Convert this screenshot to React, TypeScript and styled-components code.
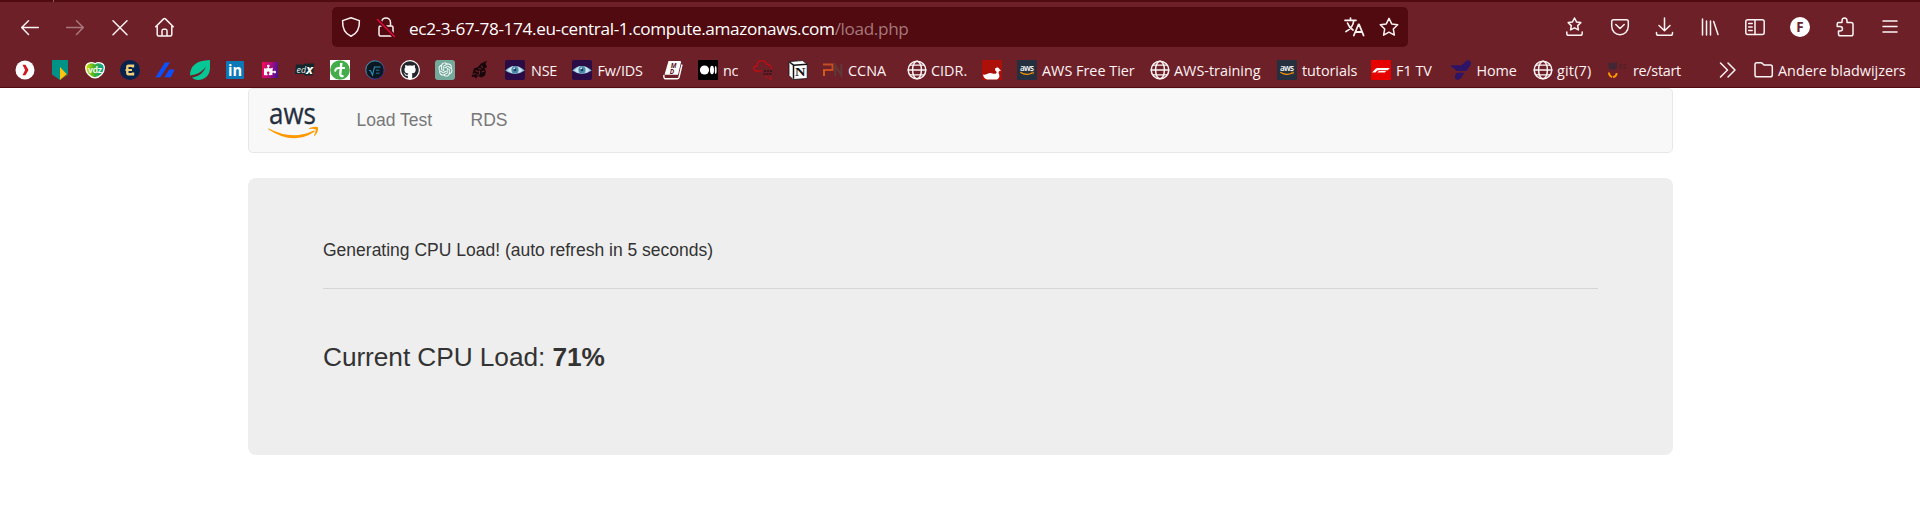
import React from "react";
import styled, { createGlobalStyle } from "styled-components";
import { FaGithub, FaPuzzlePiece } from "react-icons/fa";
import { RiOpenaiFill } from "react-icons/ri";

const chrome = "#6e2028";
const chromeDark = "#500a10";
const ink = "#fbf3f4";

const GlobalStyle = createGlobalStyle`
  body { margin: 0; background: #fff; }
  * { box-sizing: border-box; }
`;

const Screen = styled.div`
  width: 1920px;
  height: 532px;
  overflow: hidden;
  display: flex;
  flex-direction: column;
  background: #fff;
`;

const Chrome = styled.header`
  height: 88px;
  flex: none;
  background: ${chrome};
  border-bottom: 1px solid ${chromeDark};
  color: ${ink};
  font-family: "Open Sans", "Noto Sans", sans-serif;
`;

const TabEdge = styled.div`
  height: 2px;
  padding-left: 53px;
  background: ${chromeDark};
`;

const TabTick = styled.div`
  width: 1px;
  height: 2px;
  background: #94585e;
`;

const Toolbar = styled.div`
  height: 50px;
  padding-left: 20px;
  display: flex;
  align-items: center;
`;

const IconRow = styled.div<{ $gap: number; $margin?: string }>`
  display: flex;
  flex: none;
  gap: ${(p) => p.$gap}px;
  margin: ${(p) => p.$margin ?? "0"};
`;

const Glyph = styled.svg<{ $dim?: boolean }>`
  width: 20px;
  height: 20px;
  flex: none;
  display: block;
  overflow: visible;
  fill: none;
  stroke: ${ink};
  stroke-width: 1.5;
  stroke-linecap: round;
  stroke-linejoin: round;
  opacity: ${(p) => (p.$dim ? 0.42 : 1)};
`;

const AddressBar = styled.div`
  flex: none;
  width: 1076px;
  height: 40px;
  margin-left: 157px;
  padding: 0 9px 0 9px;
  border-radius: 5px;
  background: ${chromeDark};
  display: flex;
  align-items: center;
`;

const Url = styled.div`
  flex: 1;
  margin-left: 13px;
  padding-top: 4px;
  font-size: 17.2px;
  line-height: 24px;
  letter-spacing: -0.365px;
  white-space: nowrap;
  color: #fff;
`;

const UrlPath = styled.span`
  color: #a6787c;
`;

const BookmarkBar = styled.nav`
  height: 35px;
  padding: 0 0 0 15px;
  display: flex;
  align-items: center;
`;

const Bookmark = styled.div<{ $width: number }>`
  flex: none;
  width: ${(p) => p.$width}px;
  height: 20px;
  display: flex;
  align-items: center;
`;

const Label = styled.span<{ $gap: number; $spacing?: number }>`
  margin-left: ${(p) => p.$gap}px;
  padding-top: 3px;
  font-size: 14.4px;
  line-height: 20px;
  letter-spacing: ${(p) => p.$spacing ?? 0}px;
  white-space: nowrap;
`;

const Favicon = styled.svg`
  width: 20px;
  height: 20px;
  display: block;
  flex: none;
`;

const Tile = styled.div<{ $bg: string; $round?: string; $fg?: string; $size?: number }>`
  width: ${(p) => p.$size ?? 20}px;
  height: ${(p) => p.$size ?? 20}px;
  margin: ${(p) => (20 - (p.$size ?? 20)) / 2}px;
  flex: none;
  display: flex;
  align-items: center;
  justify-content: center;
  border-radius: ${(p) => p.$round ?? "0"};
  background: ${(p) => p.$bg};
  color: ${(p) => p.$fg ?? "#fff"};
`;

const Page = styled.main`
  width: 1425px;
  margin-left: 248px;
  font-family: "Liberation Sans", Arial, sans-serif;
`;

const Navbar = styled.div`
  height: 65px;
  padding-left: 19px;
  border: 1px solid #e7e7e7;
  border-radius: 5px;
  background: #f8f8f8;
  display: flex;
  align-items: flex-start;
`;

const AwsLogo = styled.svg`
  width: 52px;
  height: 34px;
  margin-top: 18px;
  flex: none;
  overflow: visible;
`;

const NavLink = styled.a<{ $left: number }>`
  margin: 19px 0 0 ${(p) => p.$left}px;
  color: #777;
  font-size: 17.5px;
  line-height: 24px;
  white-space: nowrap;
`;

const Jumbotron = styled.section`
  height: 277px;
  margin-top: 25px;
  padding: 60px 75px 0;
  border-radius: 8px;
  background: #eee;
  color: #333;
`;

const Status = styled.p`
  margin: 0;
  font-size: 17.5px;
  line-height: 25px;
  white-space: nowrap;
`;

const Rule = styled.hr`
  margin: 25px 0 0;
  border: 0;
  border-top: 1px solid #d5d5d5;
`;

const Load = styled.p`
  margin: 50px 0 0;
  font-size: 26.25px;
  line-height: 36px;
  letter-spacing: -0.06px;
  white-space: nowrap;
`;

const Globe = () => (
  <Glyph viewBox="0 0 20 20">
    <circle cx="10" cy="10" r="8.8" />
    <ellipse cx="10" cy="10" rx="4.4" ry="8.8" />
    <path d="M1.2 10h17.6M3 5.2h14M3 14.8h14" strokeWidth="1.3" />
  </Glyph>
);

const Aws = () => (
  <Favicon viewBox="0 0 20 20">
    <rect width="20" height="20" fill="#252f3e" />
    <text x="10" y="11.3" textAnchor="middle" fontFamily="Open Sans, sans-serif" fontWeight="600" fontSize="8.2" textLength="14" fill="#fff">aws</text>
    <path d="M3.3 12.2q6 4 12 .8" fill="none" stroke="#f90" strokeWidth="1.1" />
    <path d="M14.3 12.2h2.2l-.6 2" fill="none" stroke="#f90" strokeWidth=".8" />
  </Favicon>
);

const Eye = () => (
  <Favicon viewBox="0 0 20 20">
    <rect width="20" height="20" rx="2" fill="#2a0b45" />
    <path d="M.3 10.400Q9.500 1.500 19.700 10.400Q10 17.500 .3 10.400Z" fill="#86b9d1" />
    <path d="M2.500 10.400Q6 6.500 8 6.300L7.500 13.300Q5 12.500 2.500 10.400ZM12.500 6.300Q16 8 17.500 10.400Q15 12.600 12.500 13.300Z" fill="#cfe8f2" />
    <circle cx="10" cy="9.900" r="3.600" fill="#4f8aaa" />
    <circle cx="10" cy="9.900" r="1.300" fill="#123a57" />
    <circle cx="9.200" cy="8.400" r=".8" fill="#d9f2fa" />
  </Favicon>
);

const star = "M10 1.400l2.700 5.500 6 .9-4.400 4.200 1.100 6.100L10 15.200l-5.400 2.900 1.100-6.100L1.300 7.800l6-.9z";

type Entry = { width: number; icon: React.ReactNode; label?: string; gap?: number; spacing?: number };

const bookmarks: Entry[] = [
  {
    width: 35,
    icon: (
      <Favicon viewBox="0 0 20 20">
        <circle cx="10" cy="10" r="9.500" fill="#fff" />
        <path d="M7.500 4.800h3l3 5.200-3 5.200h-3l2.600-5.200z" fill="#d6181f" />
      </Favicon>
    ),
  },
  {
    width: 35,
    icon: (
      <Favicon viewBox="0 0 20 20">
        <path d="M2 0h16v14.500L10 20l-8-5.500z" fill="#009286" />
        <path d="M10 7l6.800 7.200L10 20z" fill="#ffc20e" />
        <path d="M16.800 14.200L18 15l-8 5z" fill="#6b5b22" />
      </Favicon>
    ),
  },
  {
    width: 35,
    icon: (
      <Favicon viewBox="0 0 20 20">
        <defs>
          <linearGradient id="heart" x1="0" x2="1">
            <stop offset="0" stopColor="#e9e400" />
            <stop offset=".45" stopColor="#43b02a" />
            <stop offset="1" stopColor="#00a3a0" />
          </linearGradient>
        </defs>
        <path d="M10 17.800C5 17.500.7 12.500.7 8 .7 2.800 6.500 1.500 10 3.800c3.500-2.300 9.300-1 9.300 4.200 0 4.500-4.300 9.500-9.300 9.800z" fill="url(#heart)" stroke="#fff" strokeWidth="1.300" />
        <text x="10" y="13" textAnchor="middle" fontFamily="Lato, sans-serif" fontWeight="700" fontSize="9" textLength="14" lengthAdjust="spacingAndGlyphs" fill="#fff">vdz</text>
      </Favicon>
    ),
  },
  {
    width: 35,
    icon: (
      <Favicon viewBox="0 0 20 20">
        <circle cx="10" cy="10" r="10" fill="#05234d" />
        <path d="M13 7.500V5.800H8.300Q7.300 5.800 7.300 6.800v6.400q0 1 1 1H13v-1.700" fill="none" stroke="#f1cf7a" strokeWidth="2.400" />
        <path d="M5.500 10h6.500" stroke="#f1cf7a" strokeWidth="2" />
      </Favicon>
    ),
  },
  {
    width: 35,
    icon: (
      <Favicon viewBox="0 0 20 20">
        <path d="M10 2.500h5L5.200 17.200H.5z" fill="#0a50ff" />
        <path d="M14.200 9.500h5.300l-3.600 7.700h-6.400z" fill="#0a50ff" />
      </Favicon>
    ),
  },
  {
    width: 35,
    icon: (
      <Favicon viewBox="0 0 20 20">
        <path d="M20 0v8c0 8-6 12-12 12-2.500 0-4.500-1-6-2.500C9 17 14 12 16 6.500 12 12 7 14.500 0 15.500 0 6 6 .5 20 0z" fill="#06c795" />
      </Favicon>
    ),
  },
  {
    width: 35,
    icon: (
      <Favicon viewBox="0 0 20 20">
        <rect x="1" y="1" width="18" height="18" rx="1" fill="#0b78b7" />
        <text x="3" y="15.700" textLength="14" lengthAdjust="spacingAndGlyphs" fontFamily="Open Sans, sans-serif" fontWeight="700" fontSize="16" fill="#fff">in</text>
      </Favicon>
    ),
  },
  {
    width: 35,
    icon: (
      <Tile $size={16} $bg="linear-gradient(100deg,#f2095c 5%,#b00d7b 50%,#3c1199)">
        <FaPuzzlePiece size={12} />
      </Tile>
    ),
  },
  {
    width: 35,
    icon: (
      <Favicon viewBox="0 0 20 20">
        <path d="M1 4.500h8l1-1h9.500l-1.500 12H9.500l-.5-1.500H0z" fill="#14272a" />
        <text x="1.500" y="12.500" textLength="9.500" lengthAdjust="spacingAndGlyphs" fontFamily="Open Sans, sans-serif" fontStyle="italic" fontSize="9" fill="#e9eeee">ed</text>
        <text x="11" y="14" textLength="7" lengthAdjust="spacingAndGlyphs" fontFamily="Open Sans, sans-serif" fontStyle="italic" fontWeight="700" fontSize="13" fill="#fff">x</text>
      </Favicon>
    ),
  },
  {
    width: 35,
    icon: (
      <Favicon viewBox="0 0 20 20">
        <rect width="20" height="20" fill="#fff" />
        <circle cx="10" cy="10" r="9.800" fill="#43ad49" />
        <path d="M11.300 3L10.300 14q0 2.800 3.200 1.800" fill="none" stroke="#fff" strokeWidth="2.400" />
        <path d="M5 11.500Q5.500 8 9 8h6" fill="none" stroke="#fff" strokeWidth="2" />
      </Favicon>
    ),
  },
  {
    width: 35,
    icon: (
      <Favicon viewBox="0 0 20 20">
        <defs>
          <linearGradient id="ring" x1="0" y1="0" x2="1" y2="1">
            <stop offset="0" stopColor="#35c2cf" />
            <stop offset="1" stopColor="#4a1580" />
          </linearGradient>
        </defs>
        <circle cx="10" cy="10" r="9.200" fill="#0a1620" stroke="url(#ring)" />
        <path d="M4 10.500h1.500L7.500 15 9.500 7h6" fill="none" stroke="#2e8fb4" strokeWidth="1.100" />
        <path d="M11 10.200h3.500M11 13.300h3.500" stroke="#195476" strokeWidth="1.400" />
      </Favicon>
    ),
  },
  {
    width: 35,
    icon: (
      <Tile $bg="#fff" $round="50%" $fg="#22262b">
        <FaGithub size={18} />
      </Tile>
    ),
  },
  {
    width: 35,
    icon: (
      <Tile $bg="#74aa9c" $round="3px">
        <RiOpenaiFill size={17} />
      </Tile>
    ),
  },
  {
    width: 35,
    icon: (
      <Favicon viewBox="0 0 20 20">
        <path d="M1.500 17L3 12l1-3.500 4-1.500 3-3.500L17 .8l-1.500 3L17 7l-2.500 1.500 1.500 3-1 4-3.500 2L8 16l-2 2.500-2-2z" fill="#17070a" />
        <path d="M2 14.500l4-1M5.500 10.500l3 1.500M11 6l2 1.500M8.500 8.500l3 .5M9.500 10.500v3.500M11.500 12l3-1M6.500 15.500l3-1" stroke={chrome} strokeWidth="1.100" />
      </Favicon>
    ),
  },
  { width: 67, icon: <Eye />, label: "NSE", gap: 6, spacing: -0.2 },
  { width: 91, icon: <Eye />, label: "Fw/IDS", gap: 5.5, spacing: -0.15 },
  {
    width: 35,
    icon: (
      <Favicon viewBox="0 0 20 20">
        <path d="M5.500 1H17q1.300 0 1 1.300l-3 12.400H1.500z" fill="#fff" />
        <path d="M19 4.500l-3 13Q15.600 18.800 14.300 18.800H2Q.4 18 1 15" fill="none" stroke="#fff" strokeWidth="1.400" />
        <text x="7.800" y="8" fontFamily="Open Sans, sans-serif" fontWeight="700" fontStyle="italic" fontSize="6.500" fill="#5c1820">M</text>
        <text x="6.800" y="13.600" fontFamily="Open Sans, sans-serif" fontWeight="700" fontStyle="italic" fontSize="6.500" fill="#5c1820">D</text>
      </Favicon>
    ),
  },
  {
    width: 55,
    icon: (
      <Favicon viewBox="0 0 20 20">
        <rect width="20" height="20" rx="1" fill="#000" />
        <circle cx="6.500" cy="10" r="4.600" fill="#fff" />
        <ellipse cx="14" cy="10" rx="2" ry="4.300" fill="#fff" />
        <ellipse cx="17.700" cy="10" rx=".9" ry="3.900" fill="#fff" />
      </Favicon>
    ),
    label: "nc",
    gap: 5,
    spacing: -0.3,
  },
  {
    width: 35,
    icon: (
      <Favicon viewBox="0 0 20 20">
        <path d="M8.500 11H2.500C-.5 10 .5 6 4 6 4 2 6.500.6 9 .7c2.500 0 4 1.400 4.500 3.400 3 0 4.500 2 5.500 5" fill="none" stroke="#c20d12" strokeWidth="1.300" />
        <path d="M11 11h8M10.500 14h8.500" stroke="#40131a" strokeWidth="2" strokeDasharray="2 1" />
        <path d="M12 17h7M16 19.200h3" stroke="#a31319" strokeWidth="1.400" strokeDasharray="3 1" />
      </Favicon>
    ),
  },
  {
    width: 35,
    icon: (
      <Favicon viewBox="0 0 20 20">
        <path d="M1 1.600L14.500.6 19.200 4v14.500L5 19.500 1 15.500z" fill="#fff" stroke="#111" strokeWidth=".8" />
        <path d="M1.500 2l4 3.200v13.500M5.500 5.200L19 4.300" fill="none" stroke="#111" strokeWidth="1.500" />
        <text x="7" y="16.200" fontFamily="Liberation Serif, serif" fontWeight="700" fontSize="13" textLength="10.500" lengthAdjust="spacingAndGlyphs" fill="#111">N</text>
      </Favicon>
    ),
  },
  {
    width: 84,
    icon: (
      <Favicon viewBox="0 0 20 20">
        <path d="M0 4.500h9.500v5.500H0" fill="none" stroke="#c54e20" strokeWidth="1.900" />
        <path d="M1 10v6" stroke="#d8601c" strokeWidth="1.900" />
        <path d="M12.300 16V5l6 10.500V4" fill="none" stroke="#5f3a38" strokeWidth="1.900" />
      </Favicon>
    ),
    label: "CCNA",
    gap: 5,
  },
  { width: 75, icon: <Globe />, label: "CIDR.", gap: 4 },
  {
    width: 35,
    icon: (
      <Favicon viewBox="0 0 20 20">
        <rect width="20" height="20" fill="#ad1008" />
        <path d="M1 14.500q2 .5 4-.5 3-1.500 5.500-.5 2 .6 3.500 0c1.500-.8.300-2-.700-3C11.700 7.800 16.500 6 17.500 9.300l1.500 1.200-2 .8c-.8 1.400-.3 1.900.3 3.700.6 2.200-.8 3.700-2.300 4.500H5Q1.500 18.500 1 14.500z" fill="#fff" />
      </Favicon>
    ),
  },
  { width: 133, icon: <Aws />, label: "AWS Free Tier", gap: 5 },
  { width: 127, icon: <Globe />, label: "AWS-training", gap: 4 },
  { width: 94, icon: <Aws />, label: "tutorials", gap: 5, spacing: -0.05 },
  {
    width: 80,
    icon: (
      <Favicon viewBox="0 0 20 20">
        <rect width="20" height="20" fill="#e60000" />
        <path d="M1 12.500L4 9.300Q5.200 8 7 8h11.800l-2 2.200H7.500q-1 0-1.700.8l-1.300 1.500zM6.200 12.500l1-1q.6-.6 1.500-.6h6.500l-1.500 1.600z" fill="#fff" />
      </Favicon>
    ),
    label: "F1 TV",
    gap: 5,
  },
  {
    width: 82,
    icon: (
      <Favicon viewBox="0 0 20 20">
        <path d="M0 5.300h10.500L13 3Q15-.5 18.500.5q2.200 1.500 1 4.500L15.500 11H5.500Q3 7.500 0 7z" fill="#2e1466" />
        <path d="M5.500 12.800h7.800l-3 5Q8 20.500 5 19.500 2.500 17.500 5.500 12.800z" fill="#2e1466" />
      </Favicon>
    ),
    label: "Home",
    gap: 5.500,
    spacing: -0.1,
  },
  { width: 74, icon: <Globe />, label: "git(7)", gap: 4, spacing: 0.2 },
  {
    width: 112,
    icon: (
      <Favicon viewBox="0 0 20 20">
        <path d="M1.500 2l2 1h4l2.500-1v4.500q1 3-4.300 3.300Q.5 9.500 1.500 6z" fill="#412735" />
        <path d="M12 5h7M12 8h8" stroke="#592029" strokeWidth="2" strokeDasharray="3 1" />
        <path d="M1.800 12.500q.5 4 4 5 3.500-1 4-4.500" fill="none" stroke="#f90" strokeWidth="1.900" strokeDasharray="6 1" />
      </Favicon>
    ),
    label: "re/start",
    gap: 6,
    spacing: -0.3,
  },
];

export default function App() {
  return (
    <>
      <GlobalStyle />
      <Screen>
        <Chrome>
          <TabEdge>
            <TabTick />
          </TabEdge>
          <Toolbar>
            <IconRow $gap={25}>
              <Glyph viewBox="0 0 20 20"><path d="M18.300 10.500H1.800M8.500 3.700L1.700 10.500l6.800 7" /></Glyph>
              <Glyph viewBox="0 0 20 20" $dim><path d="M1.700 10.500h16.500M11.500 3.700l6.800 6.800-6.800 7" /></Glyph>
              <Glyph viewBox="0 0 20 20"><path d="M3 3.800l14 14M17 3.800l-14 14" /></Glyph>
              <Glyph viewBox="0 0 20 20">
                <path d="M1.200 9.800l7.900-7.900q.9-.9 1.800 0l7.900 7.900M2.700 9v8.500q0 1.500 1.500 1.500h11.600q1.500 0 1.500-1.500V9M7.500 19v-5q0-1.800 1.200-1.800h2.600q1.200 0 1.200 1.800v5" transform="translate(-.5 0)" />
              </Glyph>
            </IconRow>
            <AddressBar>
              <IconRow $gap={15}>
                <Glyph viewBox="0 0 20 20"><path d="M10 .8l8.400 2.800c.3 7-1.400 12.700-8.400 15.600C3 16.300 1.300 10.600 1.600 3.600z" /></Glyph>
                <Glyph viewBox="0 0 20 20">
                  <path d="M5.500 9V5.500C5.500-.5 14.500-.5 14.500 5.500V9M4.500 9h11q1.500 0 1.500 1.500v7q0 1.500-1.500 1.500h-11Q3 19 3 17.500v-7Q3 9 4.500 9z" />
                  <path d="M1.500 2.500l17 17" stroke={chromeDark} strokeWidth="4" />
                  <path d="M1.500 2.500l17 17" stroke="#e1063c" strokeWidth="1.600" />
                </Glyph>
              </IconRow>
              <Url>ec2-3-67-78-174.eu-central-1.compute.amazonaws.com<UrlPath>/load.php</UrlPath></Url>
              <IconRow $gap={15}>
                <Glyph viewBox="0 0 20 20">
                  <path d="M1 3.300h11M6.500 1v2M2 14.500Q9 11 9.800 3.500M3.500 6q1.500 4.500 5.500 7" strokeWidth="1.700" />
                  <path d="M9.800 18.500L14.500 7.500h.6l4.500 11M11.500 15h6.500" strokeWidth="1.800" />
                </Glyph>
                <Glyph viewBox="0 0 20 20"><path d={star} /></Glyph>
              </IconRow>
            </AddressBar>
            <IconRow $gap={25} $margin="0 0 0 157px">
              <Glyph viewBox="0 0 20 20">
                <path d="M9.500 1l2 3.900 4.300.7-3.100 3 .7 4.300-3.900-2-3.900 2 .7-4.300-3.100-3 4.300-.7z" />
                <path d="M1.800 15v1.500q0 1.800 1.800 1.800h11.800q1.800 0 1.800-1.800V15" />
              </Glyph>
              <Glyph viewBox="0 0 20 20">
                <path d="M3.500 2.700h13q1.800 0 1.800 1.800V9c0 11.500-16.600 11.500-16.600 0V4.500q0-1.800 1.800-1.800zM5.800 7.500L10 11.500l4.200-4" />
              </Glyph>
              <Glyph viewBox="0 0 20 20"><path d="M9.500 1v12.500M4 8.500l5.500 5.300 5.500-5.300M1.500 15.500v1q0 1.800 1.800 1.800h12.400q1.800 0 1.800-1.800v-1" /></Glyph>
              <Glyph viewBox="0 0 20 20"><path d="M2.500 2v16M6.500 4v14M10.500 4v14M13.700 4.500l4.300 13" /></Glyph>
              <Glyph viewBox="0 0 20 20">
                <rect x=".8" y="2.800" width="18.400" height="14.800" rx="2" />
                <path d="M10 2.800v14.800M3.700 6.500h3.500M3.700 10h3.500M3.700 13.500h3.500" />
              </Glyph>
              <Glyph viewBox="0 0 20 20">
                <circle cx="10" cy="10" r="10" fill="#fff" stroke="none" />
                <text x="10" y="15" textAnchor="middle" fontFamily="Open Sans, sans-serif" fontWeight="700" fontSize="13.500" fill={chrome} stroke="none">F</text>
              </Glyph>
              <Glyph viewBox="0 0 20 20">
                <path d="M7 5.500V4c0-4 5-4 5 0v1.500h4q2 0 2 2V17q0 1.800-1.800 1.800H5.300Q3.500 18.800 3.500 17v-3H5c3.300 0 3.300-4.500 0-4.500H2.200V7q0-1.500 1.500-1.500z" />
              </Glyph>
              <Glyph viewBox="0 0 20 20"><path d="M3 4h14M3 9.500h14M3 15h14" /></Glyph>
            </IconRow>
          </Toolbar>
          <BookmarkBar>
            {bookmarks.map((b, i) => (
              <Bookmark key={i} $width={b.width}>
                {b.icon}
                {b.label && <Label $gap={b.gap ?? 5} $spacing={b.spacing}>{b.label}</Label>}
              </Bookmark>
            ))}
            <Bookmark $width={35}>
              <Glyph viewBox="0 0 20 20"><path d="M1.500 3l7 7-7 7M9 3l7 7-7 7" /></Glyph>
            </Bookmark>
            <Bookmark $width={155}>
              <Glyph viewBox="0 0 20 20"><path d="M1 15V4.500q0-1.800 1.800-1.800h4q1 0 1.700.8l1.500 1.600h6.500q1.800 0 1.800 1.800V15q0 1.800-1.800 1.800H2.800Q1 16.800 1 15z" /></Glyph>
              <Label $gap={4}>Andere bladwijzers</Label>
            </Bookmark>
          </BookmarkBar>
        </Chrome>
        <Page>
          <Navbar>
            <AwsLogo viewBox="0 0 52 34">
              <text x="1" y="17" textLength="47" lengthAdjust="spacingAndGlyphs" fontFamily="Open Sans, sans-serif" fontWeight="500" fontSize="28.500" fill="#252f3e" stroke="#252f3e" strokeWidth=".3">aws</text>
              <path d="M.3 21.300q24 12.800 45.500 2.200 1.500-.4.600 1.300Q25 39 .2 22.300z" fill="#f90" />
              <path d="M41 21.300q4.500-2.500 9-1 .5 5-3.500 8.800-.8.200-.4-.8 2-4.600 1.500-6-2-.9-6.300-.2z" fill="#f90" />
            </AwsLogo>
            <NavLink $left={36.500}>Load Test</NavLink>
            <NavLink $left={38.500}>RDS</NavLink>
          </Navbar>
          <Jumbotron>
            <Status>Generating CPU Load! (auto refresh in 5 seconds)</Status>
            <Rule />
            <Load>Current CPU Load: <b>71%</b></Load>
          </Jumbotron>
        </Page>
      </Screen>
    </>
  );
}
